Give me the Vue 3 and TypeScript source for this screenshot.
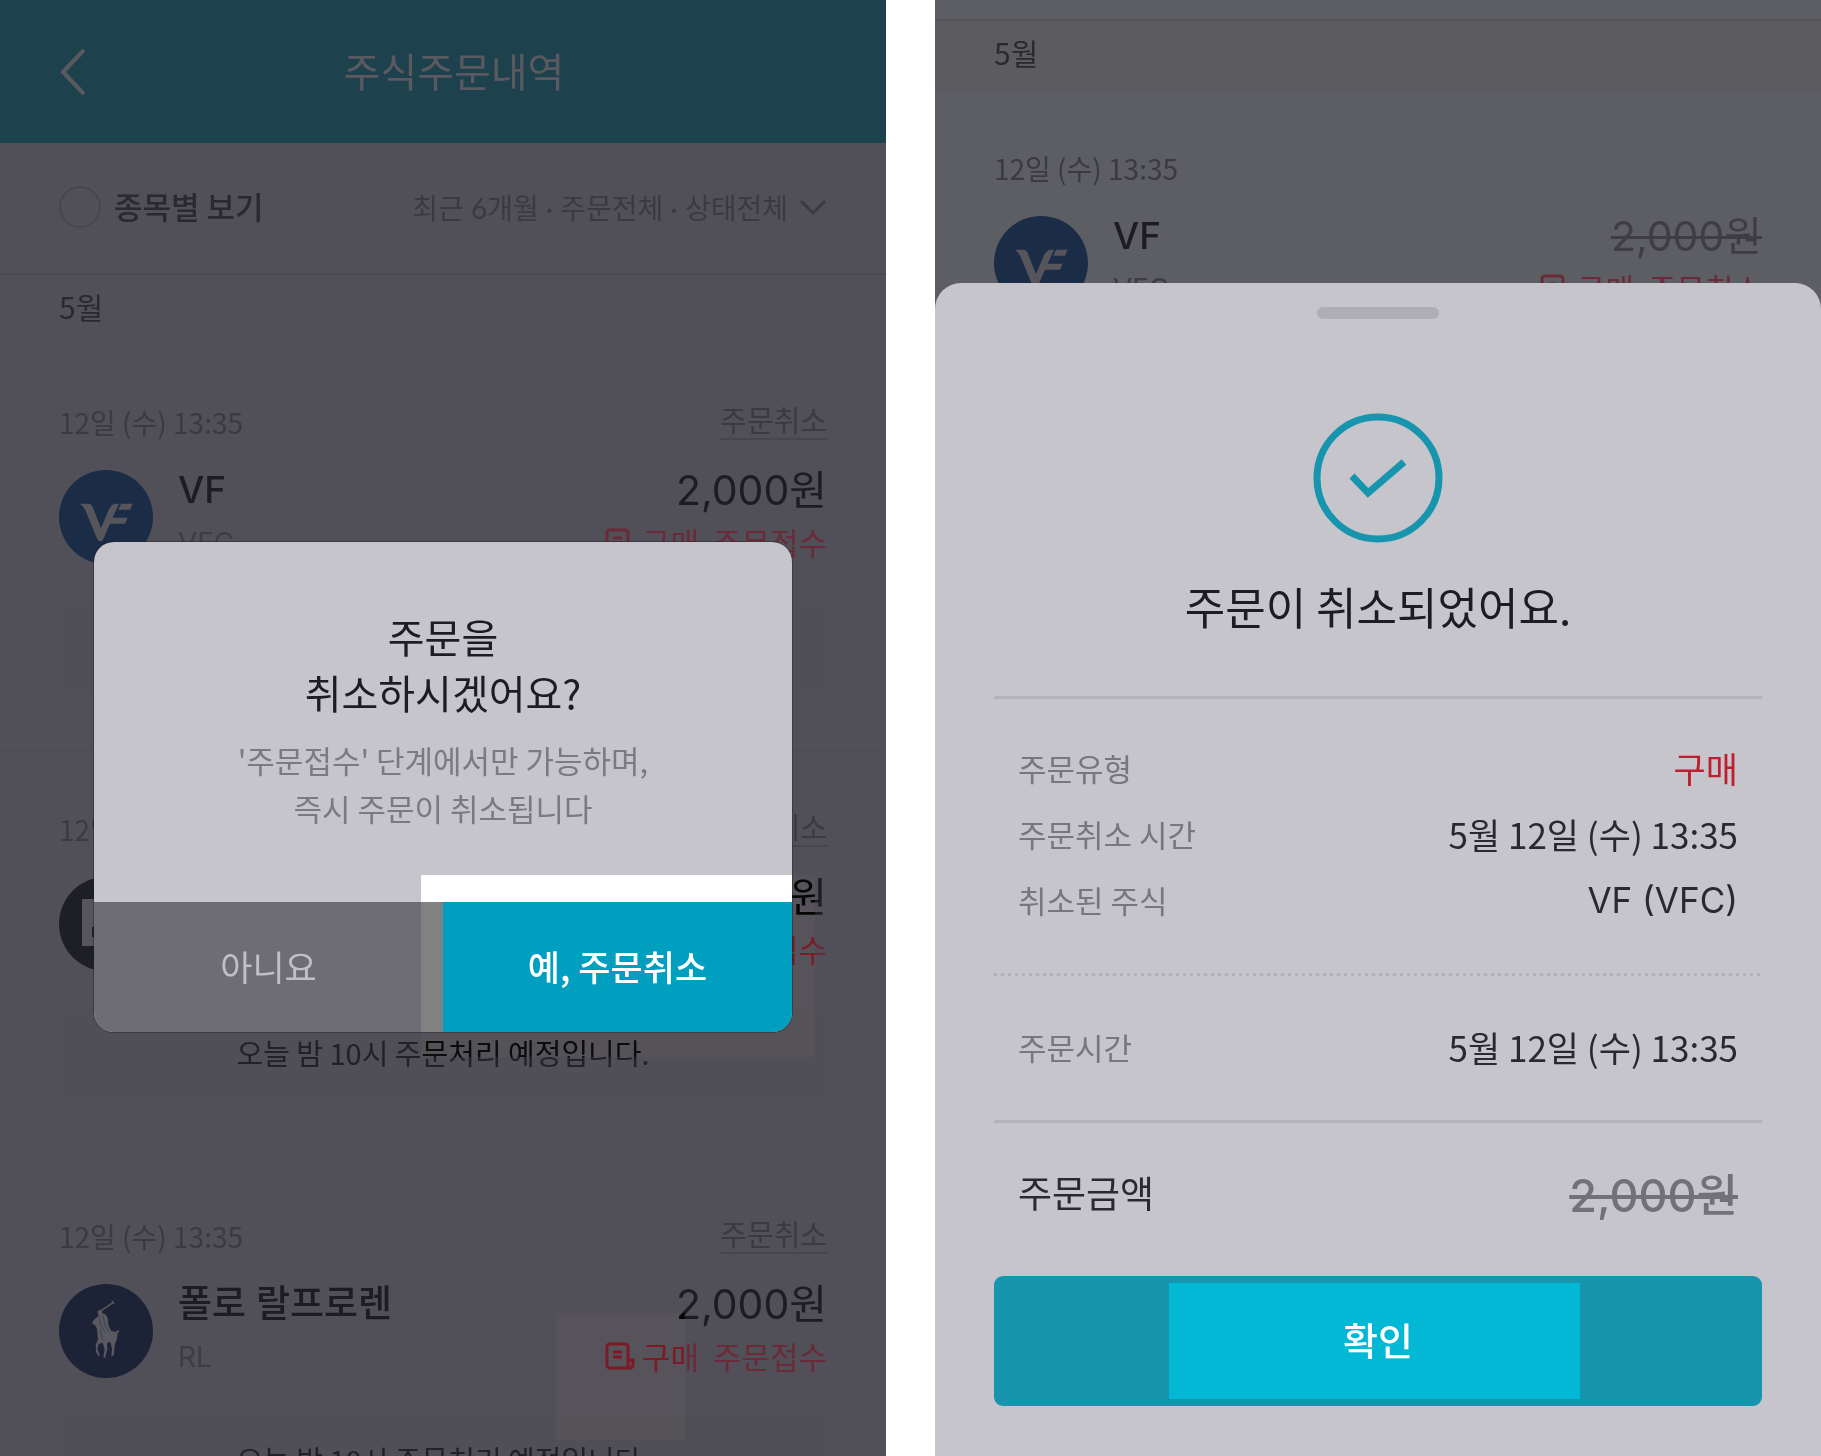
<script setup lang="ts">
import { ref } from 'vue'

type Logo = 'vf' | 'block' | 'polo'

interface Order {
  logo: Logo
  name: string
  ticker: string
  status: string
}

const orders: Order[] = [
  { logo: 'vf', name: 'VF', ticker: 'VFC', status: '주문접수' },
  { logo: 'block', name: '', ticker: '', status: '주문접수' },
  { logo: 'polo', name: '폴로 랄프로렌', ticker: 'RL', status: '주문접수' },
]

const details = [
  { label: '주문유형', value: '구매', tone: 'buy' },
  { label: '주문취소 시간', value: '5월 12일 (수) 13:35', tone: '' },
  { label: '취소된 주식', value: 'VF (VFC)', tone: 'latin' },
]

const grouped = ref(false)
</script>

<template>
  <main class="page">
    <section class="phone list">
      <header class="topbar">
        <button class="back" type="button" aria-label="뒤로">
          <svg viewBox="0 0 28 48" width="28" height="48"><path d="M25 2 4 24 25 46" /></svg>
        </button>
        <h1>주식주문내역</h1>
      </header>

      <div class="filters">
        <label class="group"><input v-model="grouped" type="checkbox" /><span>종목별 보기</span></label>
        <button class="period" type="button">
          <span>최근 6개월 · 주문전체 · 상태전체</span>
          <svg viewBox="0 0 28 18" width="28" height="18"><path d="M2 3 14 15 26 3" /></svg>
        </button>
      </div>

      <h2 class="month">5월</h2>

      <article v-for="order in orders" :key="order.logo" class="order">
        <div class="order-head">
          <time>12일 (수) 13:35</time>
          <a href="#">주문취소</a>
        </div>
        <div class="stock">
          <svg v-if="order.logo === 'vf'" class="logo" viewBox="27 27 282 282">
            <circle class="navy" cx="168" cy="168" r="141" />
            <path class="mark" d="M90 128H116Q124 128 128 138L153 201 177 145Q185 128 198 128H207L188 170H233L225 188H180L161 232Q157 241 151 241 145 241 142 235L106 148Q101 137 90 128ZM213 128H248L240 146H205Z" />
          </svg>
          <svg v-else-if="order.logo === 'block'" class="logo" viewBox="0 0 94 94">
            <circle class="black" cx="47" cy="47" r="47" />
            <path class="mark" d="M23 22H71V69H23ZM33 50V60H40V50Z" fill-rule="evenodd" />
          </svg>
          <svg v-else class="logo" viewBox="27 39 282 282">
            <circle class="ink" cx="168" cy="180" r="141" />
            <path class="mallet" d="M150 121 189 95M185 89 193 98" />
            <path class="horse" d="M143 122 148 116 156 119 157 127 166 130 173 141 176 166 184 180 197 183Q203 174 208 181 206 186 203 184 202 207 195 219L191 253 184 257 186 233 181 213 171 216 172 235 165 262 160 258 164 236 158 215 146 219 142 233 149 252 146 257 138 243 137 222 144 205 141 175 135 162 127 159 129 149 138 141 145 136Z" />
            <path class="crease" d="M147 136 153 165 166 184M159 133 165 164 177 183M151 176 157 207" />
          </svg>
          <div class="stock-name">
            <strong>{{ order.name }}</strong>
            <span>{{ order.ticker }}</span>
          </div>
          <div class="stock-price">
            <span class="amount">2,000원</span>
            <span class="state">
              <svg viewBox="0 0 30 28" width="30" height="28">
                <path d="M23 21V5a3 3 0 0 0-3-3H5a3 3 0 0 0-3 3v18a3 3 0 0 0 3 3h20a3 3 0 0 0 3-3v-5h-5M8 10h9M8 15h9M23 21a5 5 0 0 0 2 5" />
              </svg>
              <b>구매</b><span>{{ order.status }}</span>
            </span>
          </div>
        </div>
        <p class="notice">오늘 밤 10시 주문처리 예정입니다.</p>
      </article>

      <i class="glow glow-confirm"></i>
      <i class="glow glow-status"></i>

      <div class="dialog" role="dialog" aria-labelledby="dialog-title">
        <div class="dialog-body">
          <h2 id="dialog-title">주문을<br />취소하시겠어요?</h2>
          <p>'주문접수' 단계에서만 가능하며,<br />즉시 주문이 취소됩니다</p>
        </div>
        <div class="dialog-actions">
          <button class="no" type="button">아니요</button>
          <button class="yes" type="button">예, 주문취소</button>
        </div>
      </div>
    </section>

    <section class="phone done">
      <div class="strip"></div>
      <h2 class="month">5월</h2>
      <article class="order">
        <div class="order-head"><time>12일 (수) 13:35</time></div>
        <div class="stock">
          <svg class="logo" viewBox="27 27 282 282">
            <circle class="navy" cx="168" cy="168" r="141" />
            <path class="mark" d="M90 128H116Q124 128 128 138L153 201 177 145Q185 128 198 128H207L188 170H233L225 188H180L161 232Q157 241 151 241 145 241 142 235L106 148Q101 137 90 128ZM213 128H248L240 146H205Z" />
          </svg>
          <div class="stock-name">
            <strong>VF</strong>
            <span>VFC</span>
          </div>
          <div class="stock-price">
            <del class="amount">2,000원</del>
            <span class="state">
              <svg viewBox="0 0 30 28" width="30" height="28">
                <path d="M23 21V5a3 3 0 0 0-3-3H5a3 3 0 0 0-3 3v18a3 3 0 0 0 3 3h20a3 3 0 0 0 3-3v-5h-5M8 10h9M8 15h9M23 21a5 5 0 0 0 2 5" />
              </svg>
              <b>구매</b><span>주문취소</span>
            </span>
          </div>
        </div>
      </article>

      <div class="sheet" role="dialog" aria-labelledby="sheet-title">
        <span class="handle"></span>
        <svg class="check" viewBox="0 0 130 130" width="130" height="130">
          <circle cx="65" cy="65" r="61" />
          <path d="M39 63 55 80 91 49" />
        </svg>
        <h2 id="sheet-title">주문이 취소되었어요.</h2>
        <dl class="details">
          <div v-for="d in details" :key="d.label" class="row">
            <dt>{{ d.label }}</dt>
            <dd :class="d.tone">{{ d.value }}</dd>
          </div>
        </dl>
        <dl class="details dotted">
          <div class="row">
            <dt>주문시간</dt>
            <dd>5월 12일 (수) 13:35</dd>
          </div>
        </dl>
        <dl class="details total">
          <div class="row">
            <dt>주문금액</dt>
            <dd><del>2,000원</del></dd>
          </div>
        </dl>
        <button class="ok" type="button">확인</button>
      </div>
    </section>
  </main>
</template>

<style>
body {
  margin: 0;
  background: #fff;
}
</style>

<style scoped>
.page {
  display: flex;
  gap: 49px;
  height: 100vh;
  overflow: hidden;
  font-family: 'Noto Sans CJK KR', 'Noto Sans', sans-serif;
}
.page * {
  box-sizing: border-box;
}
h1,
h2,
p,
dl,
dd {
  margin: 0;
  font-weight: 400;
}
button {
  padding: 0;
  border: 0;
  font: inherit;
  color: inherit;
  background: none;
}
svg {
  display: block;
  fill: none;
  stroke: currentColor;
}
.phone {
  position: relative;
  flex: 1;
  min-width: 0;
  overflow: hidden;
}
.list {
  background: #514f58;
}
.done {
  background: #5c5e63;
}

.topbar {
  display: grid;
  grid-template-columns: 28px 1fr 28px;
  align-items: center;
  height: 143px;
  padding: 0 59px;
  background: #1d414d;
  color: #5b5960;
}
.topbar h1 {
  padding: 0 0 4px 22px;
  font-size: 40px;
  line-height: 56px;
  text-align: center;
}
.back svg {
  stroke-width: 4;
}

.filters {
  display: flex;
  justify-content: space-between;
  align-items: center;
  height: 130px;
  padding: 0 59px 2px;
}
.group {
  display: flex;
  align-items: center;
  gap: 13px;
  font-size: 31px;
  line-height: 40px;
  font-weight: 500;
  color: #2a292f;
}
.group span {
  padding-bottom: 2px;
}
.group input {
  appearance: none;
  width: 42px;
  height: 42px;
  margin: 0;
  border: 2px solid #48474c;
  border-radius: 50%;
}
.period {
  display: flex;
  align-items: center;
  gap: 11px;
  font-family: 'Lato', 'Noto Sans CJK KR', sans-serif;
  font-size: 28px;
  line-height: 40px;
  color: #3b3a40;
}
.period span {
  padding-top: 2px;
}
.period svg {
  stroke-width: 3;
}

.month {
  height: 72px;
  padding: 0 59px;
  border-top: 2px solid #4c4b51;
  border-bottom: 1px solid #4f4d55;
  font-size: 30px;
  line-height: 62px;
  color: #2a292f;
}
.done .month {
  background: #5c5b60;
  border-top-color: #54565a;
  border-bottom-color: #595a5f;
}
.strip {
  height: 19px;
}

.order {
  padding: 58px 59px 59px;
  border-bottom: 1px solid #4d4c52;
}
.order-head {
  display: flex;
  justify-content: space-between;
  align-items: flex-start;
  height: 40px;
  font-size: 28px;
  line-height: 38px;
  color: #3b3a40;
}
.order-head a {
  padding-bottom: 3px;
  border-bottom: 2px solid #47464c;
  font-size: 29px;
  line-height: 32px;
  color: inherit;
  text-decoration: none;
}
.stock {
  display: flex;
  gap: 25px;
  height: 94px;
  margin-top: 27px;
}
.logo {
  width: 94px;
  height: 94px;
  stroke: none;
}
.navy {
  fill: #1b2c47;
}
.black {
  fill: #1e1f24;
}
.ink {
  fill: #1d2336;
}
.mark {
  fill: #56555c;
}
.mallet {
  stroke: #5a5961;
  stroke-width: 4;
}
.horse {
  fill: #5a5961;
}
.crease {
  stroke: #34374a;
  stroke-width: 2;
}
.stock-name,
.stock-price {
  display: flex;
  flex-direction: column;
  gap: 12px;
  font-family: 'Inter', 'Noto Sans CJK KR', sans-serif;
  line-height: 40px;
}
.stock-name strong {
  height: 40px;
  font-size: 37px;
  font-weight: 500;
  color: #1d1c22;
}
.stock-name span {
  font-size: 28px;
  line-height: 42px;
  color: #3d3c42;
}
.stock-price {
  margin-left: auto;
  align-items: flex-end;
}
.amount {
  height: 40px;
  font-size: 41px;
  color: #1d1c22;
}
del.amount {
  color: #3e3d43;
  text-decoration-thickness: 3px;
}
.state {
  display: flex;
  align-items: center;
  height: 40px;
  font-family: 'Noto Sans CJK KR', sans-serif;
  font-size: 31px;
  color: #6b2a38;
}
.state svg {
  margin-right: 7px;
  stroke-width: 3;
}
.state b {
  margin-right: 14px;
  font-weight: 400;
}
.notice {
  height: 90px;
  margin-top: 38px;
  background: #504e57;
  font-size: 29px;
  line-height: 86px;
  text-align: center;
  color: #222127;
}

.glow {
  position: absolute;
  background: rgba(100, 120, 0, 0.07);
  backdrop-filter: brightness(1.2) contrast(1.39);
}
.glow-confirm {
  left: 421px;
  right: 71px;
  top: 875px;
  height: 182px;
}
.glow-status {
  left: 556px;
  right: 201px;
  top: 1313px;
  height: 127px;
}

.dialog {
  position: absolute;
  top: 542px;
  left: 94px;
  right: 94px;
  overflow: hidden;
  border-radius: 20px;
  background: #c6c5cb;
  box-shadow: 0 0 0 1px rgba(30, 28, 34, 0.4);
  text-align: center;
}
.dialog-body {
  position: relative;
  padding: 66px 0 70px;
}
.dialog-body::after {
  content: '';
  position: absolute;
  right: 0;
  bottom: 0;
  width: 371px;
  height: 27px;
  background: #fff;
}
.dialog h2 {
  font-size: 40px;
  line-height: 56px;
  color: #1d1c22;
}
.dialog p {
  margin-top: 16px;
  font-size: 31px;
  line-height: 48px;
  color: #7c7a81;
}
.dialog-actions {
  display: flex;
  height: 130px;
  font-size: 35px;
}
.dialog-actions button {
  flex: 1;
  padding-bottom: 4px;
}
.no {
  background: #6e6c74;
  box-shadow: inset -22px 0 #828182;
  color: #c0bfc5;
}
.yes {
  background: #009fc0;
  color: #fff;
  font-weight: 500;
}

.sheet {
  position: absolute;
  left: 0;
  right: 0;
  bottom: 0;
  display: flex;
  flex-direction: column;
  align-items: center;
  padding: 24px 59px 50px;
  border-radius: 26px 26px 0 0;
  background: #c6c5cb;
}
.handle {
  width: 122px;
  height: 12px;
  border-radius: 6px;
  background: #afaeb4;
}
.check {
  margin-top: 94px;
  stroke: #1895ae;
  stroke-width: 7;
}
.sheet h2 {
  margin: 33px 0 60px;
  font-size: 44px;
  line-height: 60px;
  color: #1d1c22;
}
.details {
  width: 100%;
  padding: 36px 24px 40px;
  border-top: 3px solid #b4b3b9;
}
.dotted {
  border-top: 0;
  padding-top: 41px;
  background: repeating-linear-gradient(90deg, #b2b1b7 0 3px, transparent 3px 7px) top / 100% 3px no-repeat;
}
.total {
  padding-bottom: 51px;
}
.row {
  display: flex;
  justify-content: space-between;
  height: 66px;
  line-height: 66px;
}
.row dt {
  font-size: 31px;
  color: #79777e;
}
.row dd {
  font-size: 35px;
  color: #2a292f;
}
.row .buy {
  color: #bd1f2f;
}
.row .latin {
  font-family: 'Inter', sans-serif;
}
.total dt {
  font-size: 37px;
  color: #2a292f;
}
.total dd {
  padding-top: 4px;
  font-family: 'Inter', 'Noto Sans CJK KR', sans-serif;
  font-size: 45px;
  font-weight: 500;
  color: #727177;
}
.total del {
  text-decoration-thickness: 4px;
}
.ok {
  width: 100%;
  height: 130px;
  padding-bottom: 6px;
  border-radius: 9px;
  background: linear-gradient(#02b8d5, #02b8d5) calc(50% - 4px) 50% / 411px 116px no-repeat #1895ae;
  color: #fff;
  font-size: 38px;
  font-weight: 500;
}
</style>
